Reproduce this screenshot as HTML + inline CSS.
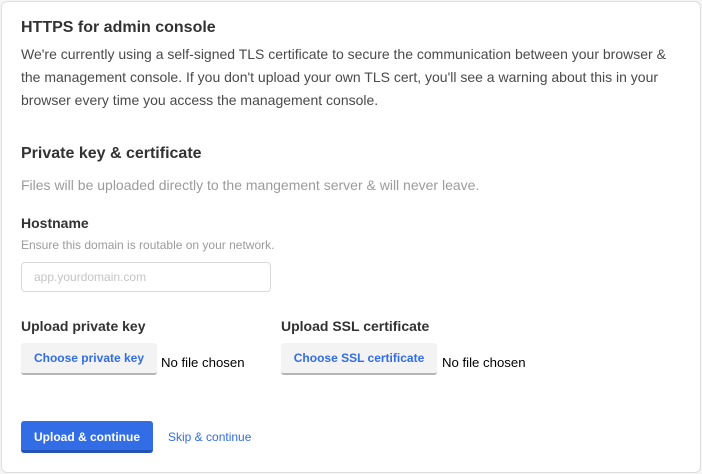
<!DOCTYPE html>
<html><head><style>
body{margin:0;background:#f5f5f5;font-family:"Liberation Sans",sans-serif;color:#323232;}
.card{position:absolute;left:1px;top:1px;width:698px;height:470px;background:#fff;border:1px solid #dedede;border-radius:6px;}
.a{position:absolute;white-space:nowrap;}
h1{position:absolute;left:19px;top:17px;margin:0;font-size:16px;font-weight:bold;}
.p{left:19px;top:41px;font-size:14px;line-height:23px;color:#4a4a4a;white-space:normal;width:664px;}
.btn{position:absolute;height:30px;background:#f3f3f3;border-radius:3px;border-bottom:2px solid #b5b5b5;color:#326de6;font-size:12px;font-weight:bold;line-height:31px;text-align:center;}
</style></head><body>
<div class="card">
<h1>HTTPS for admin console</h1>
<div class="a p">We're currently using a self-signed TLS certificate to secure the communication between your browser &amp; the management console. If you don't upload your own TLS cert, you'll see a warning about this in your browser every time you access the management console.</div>
<div class="a" style="left:19px;top:143px;font-size:16px;font-weight:bold">Private key &amp; certificate</div>
<div class="a" style="left:19px;top:175px;font-size:14px;color:#9b9b9b">Files will be uploaded directly to the mangement server &amp; will never leave.</div>
<div class="a" style="left:19px;top:213px;font-size:14px;font-weight:bold">Hostname</div>
<div class="a" style="left:19px;top:236px;font-size:12px;color:#9b9b9b">Ensure this domain is routable on your network.</div>
<div class="a" style="left:19px;top:260px;width:248px;height:28px;border:1px solid #dadada;border-radius:4px;font-size:12px;color:#c4c4c4;line-height:28px;text-indent:12px">app.yourdomain.com</div>
<div class="a" style="left:19px;top:316px;font-size:14px;font-weight:bold">Upload private key</div>
<div class="a" style="left:279px;top:316px;font-size:14px;font-weight:bold">Upload SSL certificate</div>
<div class="btn" style="left:19px;top:341px;width:136px">Choose private key</div>
<div class="a" style="left:159px;top:353px;font-size:13.2px;color:#000">No file chosen</div>
<div class="btn" style="left:279px;top:341px;width:156px">Choose SSL certificate</div>
<div class="a" style="left:440px;top:353px;font-size:13.2px;color:#000">No file chosen</div>
<div class="a" style="left:19px;top:419px;width:132px;height:29px;background:#326de6;border-bottom:3px solid #2453b8;border-radius:3px;color:#fff;font-size:12px;font-weight:bold;line-height:32px;text-align:center">Upload &amp; continue</div>
<div class="a" style="left:166px;top:428px;font-size:12px;color:#326de6">Skip &amp; continue</div>
</div>
</body></html>
